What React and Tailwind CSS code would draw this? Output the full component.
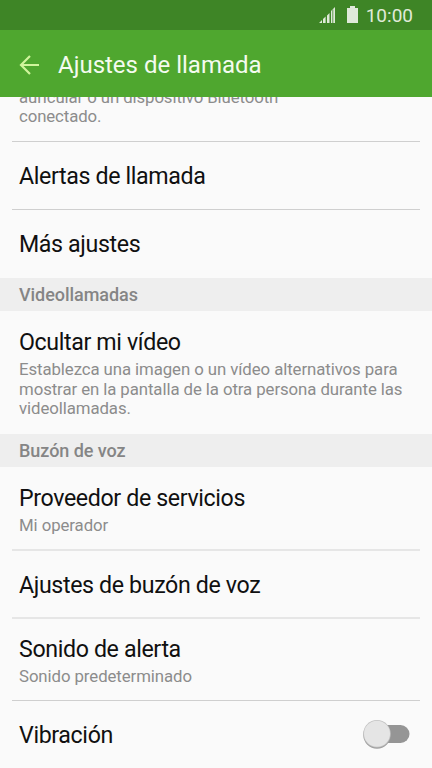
import React, { useState } from 'react';

const Row = ({ title, subtitle, className, children }) => (
  <div className={`flex justify-between px-[19px] ${className}`}>
    <div>
      <h3 className="text-[23.2px] leading-[27px] tracking-[-0.37px] text-[#101010]">{title}</h3>
      {subtitle && (
        <p className="mt-1 -mr-2 text-[16.8px] leading-[19.6px] tracking-[-0.08px] text-[#8c8c8c]">{subtitle}</p>
      )}
    </div>
    {children}
  </div>
);

const Divider = ({ className = 'h-px bg-[#cfcfcf]' }) => <div className={`mx-3 ${className}`} />;

const SectionHeader = ({ children }) => (
  <h2 className="flex h-[33px] items-center bg-[#eeeeee] px-[19px] text-[18px] font-medium tracking-[-0.05px] text-[#858585]">
    {children}
  </h2>
);

const Toggle = ({ checked, onChange }) => (
  <button
    role="switch"
    aria-checked={checked}
    aria-label="Vibración"
    onClick={() => onChange(!checked)}
    className="-mt-1 mr-[3px] h-8 w-[50px]"
  >
    <svg viewBox="0 0 50 32" className="h-8 w-[50px]">
      <rect x="14" y="7" width="35.5" height="18" rx="9" fill={checked ? '#8cc63f' : '#959595'} />
      <circle cx={checked ? 35 : 17} cy="17" r="13.7" fill="#a0a0a0" />
      <circle cx={checked ? 35 : 17} cy="15.8" r="13.7" fill="#c2c2c2" />
      <circle cx={checked ? 35 : 17} cy="15.8" r="13" fill="#e5e5e5" />
    </svg>
  </button>
);

const StatusBar = () => (
  <div className="flex h-[30px] shrink-0 items-center justify-end bg-[#3e8526] pt-[2px] pr-[19px] text-[#e0ead9]">
    <svg viewBox="0 0 40 18" className="-mt-[2px] mr-2 h-[18px] w-10">
      <path d="M1 17l3-3v3zM5 17v-4l2.6-2.6V17zM9 17V9.5L11.5 7v10zM13 17V5l4-4v16z" fill="#e0e9da" />
      <path d="M14.8 3.5V17" stroke="#3e8526" strokeWidth="0.8" />
      <path d="M29 2h3V0h5v2h3v15H29z" fill="#e0e9da" />
    </svg>
    <span className="text-[19px]">10:00</span>
  </div>
);

const App = () => {
  const [vibration, setVibration] = useState(false);

  return (
    <div className="flex h-[768px] w-[432px] flex-col overflow-hidden bg-[#fafafa] font-['Roboto',sans-serif]">
      <StatusBar />
      <header className="flex h-[67px] shrink-0 items-center bg-[#4fa72f] pt-[3px] pl-[19px] text-[#f4fbef]">
        <svg viewBox="0 0 20 20" className="h-5 w-5" fill="none" stroke="#d0f59c" strokeWidth="2.2">
          <path d="M20 10H2M11 1L2 10L11 19" />
        </svg>
        <h1 className="ml-[19px] text-[24px]">Ajustes de llamada</h1>
      </header>

      <main className="min-h-0 flex-1 overflow-hidden">
        <div className="flex h-11 flex-col justify-end overflow-hidden px-[19px] pb-[14px]">
          <p className="text-[16.8px] leading-[19.6px] tracking-[-0.1px] text-[#8c8c8c]">
            auricular o un dispositivo Bluetooth
            <br />
            conectado.
          </p>
        </div>
        <Divider />
        <Row title="Alertas de llamada" className="h-[67px] pt-[21px]" />
        <Divider />
        <Row title="Más ajustes" className="h-[68px] pt-[21px]" />
        <SectionHeader>Videollamadas</SectionHeader>
        <Row
          title="Ocultar mi vídeo"
          subtitle="Establezca una imagen o un vídeo alternativos para mostrar en la pantalla de la otra persona durante las videollamadas."
          className="h-[123px] pt-[18px]"
        />
        <SectionHeader>Buzón de voz</SectionHeader>
        <Row title="Proveedor de servicios" subtitle="Mi operador" className="h-[82px] pt-[18px]" />
        <Divider className="h-[2px] bg-[#e6e6e6]" />
        <Row title="Ajustes de buzón de voz" className="h-[66px] pt-[21px]" />
        <Divider className="h-[2px] bg-[#e6e6e6]" />
        <Row title="Sonido de alerta" subtitle="Sonido predeterminado" className="h-[81px] pt-[17px]" />
        <Divider />
        <Row title="Vibración" className="h-[67px] pt-[21px]">
          <Toggle checked={vibration} onChange={setVibration} />
        </Row>
      </main>
    </div>
  );
};

export default App;
